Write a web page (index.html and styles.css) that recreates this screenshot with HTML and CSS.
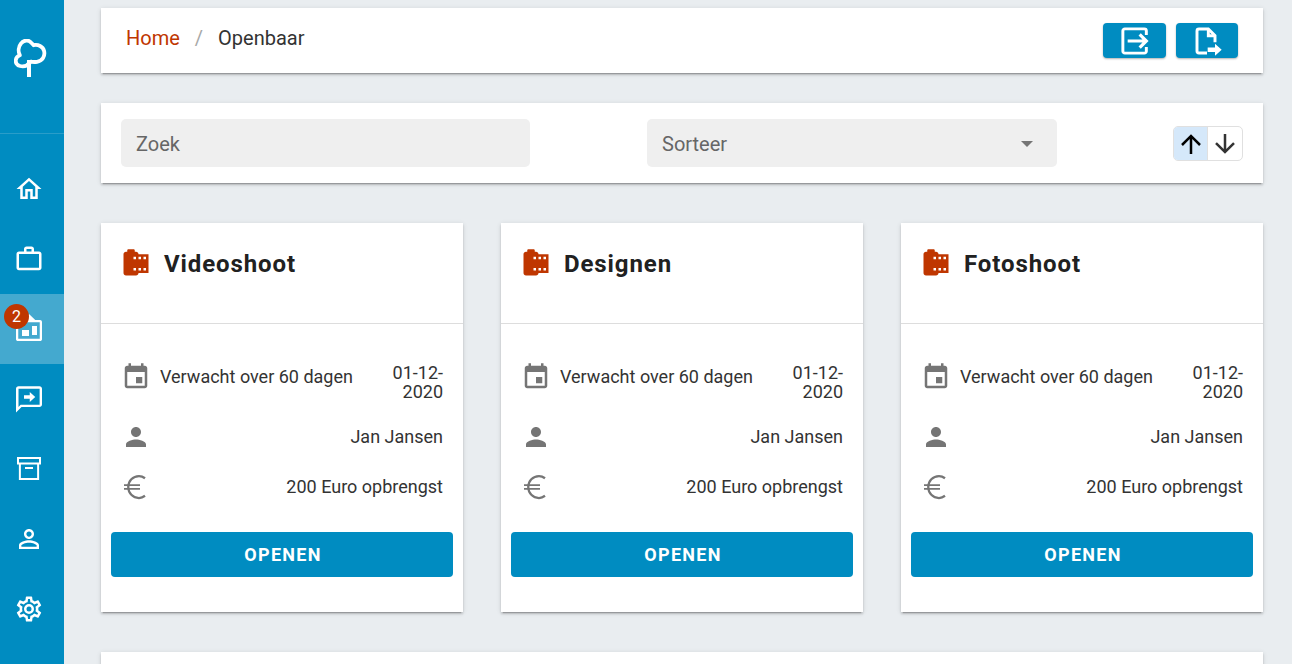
FILE: index.html
```html
<!DOCTYPE html>
<html lang="nl">
<head>
<meta charset="utf-8">
<title>Openbaar</title>
<link rel="stylesheet" href="styles.css">
</head>
<body>
<svg class="defs" width="0" height="0" aria-hidden="true">
  <symbol id="i-roll" viewBox="0 0 24 24"><path d="M14 5c0-1.1-.9-2-2-2h-1V2c0-.55-.45-1-1-1H6c-.55 0-1 .45-1 1v1H4c-1.1 0-2 .9-2 2v15c0 1.1.9 2 2 2h8c1.1 0 2-.9 2-2h8V5h-8zm-2 13h-2v-2h2v2zm0-9h-2V7h2v2zm4 9h-2v-2h2v2zm0-9h-2V7h2v2zm4 9h-2v-2h2v2zm0-9h-2V7h2v2z"/></symbol>
  <symbol id="i-event" viewBox="0 0 24 24"><path d="M17 12h-5v5h5v-5zM16 1v2H8V1H6v2H5c-1.11 0-1.99.9-1.99 2L3 19c0 1.1.89 2 2 2h14c1.1 0 2-.9 2-2V5c0-1.1-.9-2-2-2h-1V1h-2zm3 18H5V8h14v11z"/></symbol>
  <symbol id="i-person" viewBox="0 0 24 24"><path d="M12 12c2.21 0 4-1.79 4-4s-1.79-4-4-4-4 1.79-4 4 1.79 4 4 4zm0 2c-2.67 0-8 1.34-8 4v2h16v-2c0-2.66-5.33-4-8-4z"/></symbol>
  <symbol id="i-euro" viewBox="0 0 24 24"><path d="M19.200 5C17.800 3.900 16.200 3.200 14.400 3.200 9.500 3.200 5.800 7.200 5.800 12s3.700 8.800 8.600 8.800c1.800 0 3.400-.7 4.800-1.800" fill="none" stroke="currentColor" stroke-width="1.800"/><path d="M2.400 10.500H15.200M2.400 13.500H15.200" fill="none" stroke="currentColor" stroke-width="1.500"/></symbol>
</svg>

<nav class="sidebar">
  <div class="brand">
    <svg class="logo" viewBox="14 39 33 38" fill="none" stroke="#fff" stroke-width="3.800" stroke-linejoin="round">
      <path d="M30 62.500C27.500 65.800 23.500 66.800 20 66 16.800 65.300 15.400 62.500 15.800 60 16.100 57.800 17.500 56 19.800 55.200 18 51.500 18.400 46.500 21 43.500 23.500 40 28.500 39.500 31 42.500 32 43.500 33 44.200 33.500 45.200 38 44 43 46.500 44.100 51 45.300 56 42.500 60.800 37 61.800 34 62.300 32 62 30 61.200"/>
      <path d="M29 60V77" stroke-width="4"/>
    </svg>
  </div>
  <a class="nav-item"><svg class="nav-icon" viewBox="0 0 24 24"><path d="M12 5.690l5 4.500V18h-2v-6H9v6H7v-7.810l5-4.500M12 3L2 12h3v8h6v-6h2v6h6v-8h3L12 3z"/></svg></a>
  <a class="nav-item"><svg class="nav-icon" viewBox="0 0 24 24"><path d="M14 6V4h-4v2h4zM4 8v11h16V8H4zm16-2c1.110 0 2 .89 2 2v11c0 1.110-.89 2-2 2H4c-1.110 0-2-.89-2-2l.01-11c0-1.110.88-2 1.990-2h4V4c0-1.110.89-2 2-2h4c1.110 0 2 .89 2 2v2h4z"/></svg></a>
  <a class="nav-item active">
    <svg class="nav-icon" viewBox="0 0 24 24"><path fill-rule="evenodd" d="M12 0L17 4.800h3.900c.8 0 1.500.7 1.500 1.500v13.800c0 .8-.7 1.500-1.500 1.500H3.100c-.8 0-1.500-.7-1.500-1.500V6.300c0-.8.7-1.500 1.500-1.500H7zM3.400 6.600v13.200h17.200V6.600zM6.400 12.800H12v4.800H6.400zM14.400 9.600h4v7.200h-4z"/></svg>
    <span class="badge">2</span>
  </a>
  <a class="nav-item"><svg class="nav-icon" viewBox="0 0 24 24"><path fill-rule="evenodd" d="M3.600 1.800h16.800c1.100 0 2 .9 2 2v12.600c0 1.100-.9 2-2 2H6l-4.400 4.400V3.800c0-1.100.9-2 2-2zm0 1.900v14.600l1.700-1.700h15.200V3.700zM12.600 6.400l4.400 4-4.400 4v-2.600H8V9h4.600z"/></svg></a>
  <a class="nav-item"><svg class="nav-icon" viewBox="0 0 24 24"><path fill-rule="evenodd" d="M2.400 2.400h19.200v6h-1.500v12.400H3.900V8.400H2.400zM4 4v2.800h16V4zM5.500 8.400v10.800h13V8.400zM8.800 10.400h6.400V12H8.800z"/></svg></a>
  <a class="nav-item"><svg class="nav-icon" viewBox="0 0 24 24"><path d="M12 5.900c1.160 0 2.100.94 2.100 2.100s-.94 2.100-2.100 2.100S9.900 9.160 9.900 8s.94-2.100 2.100-2.100m0 9c2.970 0 6.100 1.460 6.100 2.100v1.100H5.900V17c0-.64 3.130-2.100 6.100-2.100M12 4C9.790 4 8 5.790 8 8s1.790 4 4 4 4-1.790 4-4-1.790-4-4-4zm0 9c-2.670 0-8 1.340-8 4v3h16v-3c0-2.660-5.330-4-8-4z"/></svg></a>
  <a class="nav-item"><svg class="nav-icon" viewBox="0 0 24 24"><path d="M12,8A4,4 0 0,1 16,12A4,4 0 0,1 12,16A4,4 0 0,1 8,12A4,4 0 0,1 12,8M12,10A2,2 0 0,0 10,12A2,2 0 0,0 12,14A2,2 0 0,0 14,12A2,2 0 0,0 12,10M10,22C9.750,22 9.540,21.820 9.500,21.580L9.130,18.930C8.500,18.680 7.960,18.340 7.440,17.940L4.950,18.950C4.730,19.030 4.460,18.950 4.340,18.730L2.340,15.270C2.210,15.050 2.270,14.780 2.460,14.630L4.570,12.970L4.500,12L4.570,11L2.460,9.370C2.270,9.220 2.210,8.950 2.340,8.730L4.340,5.270C4.460,5.050 4.730,4.960 4.950,5.050L7.440,6.050C7.960,5.660 8.500,5.320 9.130,5.070L9.500,2.420C9.540,2.180 9.750,2 10,2H14C14.250,2 14.460,2.180 14.500,2.420L14.870,5.070C15.500,5.320 16.040,5.660 16.560,6.050L19.050,5.050C19.270,4.960 19.540,5.050 19.660,5.270L21.660,8.730C21.790,8.950 21.730,9.220 21.540,9.370L19.430,11L19.500,12L19.430,13L21.540,14.630C21.730,14.780 21.790,15.050 21.660,15.270L19.660,18.730C19.540,18.950 19.270,19.040 19.050,18.950L16.560,17.950C16.040,18.340 15.500,18.680 14.870,18.930L14.500,21.580C14.460,21.820 14.250,22 14,22H10M11.250,4L10.880,6.610C9.680,6.860 8.620,7.500 7.850,8.390L5.440,7.350L4.690,8.650L6.800,10.200C6.400,11.370 6.400,12.640 6.800,13.800L4.680,15.360L5.430,16.660L7.860,15.620C8.630,16.500 9.680,17.140 10.870,17.380L11.240,20H12.760L13.130,17.390C14.320,17.140 15.370,16.500 16.140,15.620L18.570,16.660L19.320,15.360L17.200,13.810C17.600,12.640 17.600,11.370 17.200,10.200L19.310,8.650L18.560,7.350L16.150,8.390C15.380,7.500 14.320,6.860 13.120,6.620L12.750,4H11.250Z"/></svg></a>
</nav>

<main class="content">
  <section class="panel breadcrumb-bar">
    <div class="crumbs">
      <a class="crumb-link">Home</a>
      <span class="crumb-sep">/</span>
      <span class="crumb-current">Openbaar</span>
    </div>
    <div class="actions">
      <button class="action">
        <svg class="action-icon" viewBox="0 0 24 24" fill="none" stroke="#fff" stroke-width="2.200"><path d="M20.500 7.500V4.400A1.500 1.500 0 0 0 19 2.900H4.400A1.500 1.500 0 0 0 2.900 4.400v15.200A1.500 1.500 0 0 0 4.400 21.100H19a1.500 1.500 0 0 0 1.500-1.500v-3.100"/><path d="M6.500 12H20M15.500 7l5 5-5 5" stroke-width="2.400"/></svg>
      </button>
      <button class="action action-file">
        <svg class="action-icon" viewBox="0 0 24 24" fill="none" stroke="#fff" stroke-width="2.200"><path d="M12 21H6A1.500 1.500 0 0 1 4.500 19.500v-15A1.500 1.500 0 0 1 6 3h7l5 5v5"/><path d="M13 3v5h5"/><path fill="#fff" stroke="none" d="M12.500 16.800h5.500V14l5 4.500-5 4.500v-2.800h-5.500z"/></svg>
      </button>
    </div>
  </section>

  <section class="panel filter-bar">
    <div class="field">Zoek</div>
    <div class="field field-select">Sorteer<span class="caret"></span></div>
    <div class="toggle">
      <span class="toggle-cell selected"><svg class="toggle-icon" viewBox="0 0 24 24"><path d="M13 20h-2V8l-5.500 5.500-1.420-1.420L12 4.160l7.920 7.920-1.420 1.420L13 8v12z"/></svg></span>
      <span class="toggle-cell"><svg class="toggle-icon muted" viewBox="0 0 24 24"><path d="M11 4h2v12l5.500-5.500 1.420 1.420L12 19.840l-7.920-7.920L5.500 10.500 11 16V4z"/></svg></span>
    </div>
  </section>

  <section class="cards">
    <article class="card">
      <header class="card-head"><svg class="roll"><use href="#i-roll"/></svg><h2 class="card-title">Videoshoot</h2></header>
      <div class="card-body">
        <div class="row row-first"><div class="row-left"><svg class="row-icon"><use href="#i-event"/></svg><span class="row-label">Verwacht over 60 dagen</span></div><span class="row-date">01-12-2020</span></div>
        <div class="row"><svg class="row-icon"><use href="#i-person"/></svg><span class="row-value">Jan Jansen</span></div>
        <div class="row"><svg class="row-icon"><use href="#i-euro"/></svg><span class="row-value">200 Euro opbrengst</span></div>
      </div>
      <button class="open">OPENEN</button>
    </article>
    <article class="card">
      <header class="card-head"><svg class="roll"><use href="#i-roll"/></svg><h2 class="card-title">Designen</h2></header>
      <div class="card-body">
        <div class="row row-first"><div class="row-left"><svg class="row-icon"><use href="#i-event"/></svg><span class="row-label">Verwacht over 60 dagen</span></div><span class="row-date">01-12-2020</span></div>
        <div class="row"><svg class="row-icon"><use href="#i-person"/></svg><span class="row-value">Jan Jansen</span></div>
        <div class="row"><svg class="row-icon"><use href="#i-euro"/></svg><span class="row-value">200 Euro opbrengst</span></div>
      </div>
      <button class="open">OPENEN</button>
    </article>
    <article class="card">
      <header class="card-head"><svg class="roll"><use href="#i-roll"/></svg><h2 class="card-title">Fotoshoot</h2></header>
      <div class="card-body">
        <div class="row row-first"><div class="row-left"><svg class="row-icon"><use href="#i-event"/></svg><span class="row-label">Verwacht over 60 dagen</span></div><span class="row-date">01-12-2020</span></div>
        <div class="row"><svg class="row-icon"><use href="#i-person"/></svg><span class="row-value">Jan Jansen</span></div>
        <div class="row"><svg class="row-icon"><use href="#i-euro"/></svg><span class="row-value">200 Euro opbrengst</span></div>
      </div>
      <button class="open">OPENEN</button>
    </article>
  </section>

  <section class="panel next-panel"></section>
</main>
</body>
</html>
```
FILE: styles.css
```css
* { box-sizing: border-box; }
html, body { height: 100%; }
body {
  margin: 0;
  display: flex;
  height: 664px;
  overflow: hidden;
  background: #e9edf0;
  font-family: Roboto, "Liberation Sans", sans-serif;
  color: #333;
}
.defs { position: absolute; }

.sidebar {
  width: 64px;
  flex: none;
  background: #008cc1;
  display: flex;
  flex-direction: column;
}
.brand {
  height: 134px;
  flex: none;
  border-bottom: 1px solid #2a9dc9;
  margin-bottom: 20px;
  padding: 39px 0 0 14px;
}
.logo { width: 33px; height: 38px; display: block; }
.nav-item {
  height: 70px;
  flex: none;
  display: flex;
  align-items: center;
  justify-content: center;
  padding-right: 6px;
  position: relative;
}
.nav-item.active { background: #44a9cf; }
.nav-icon { width: 30px; height: 30px; fill: #fff; }
.badge {
  position: absolute;
  left: 4px;
  top: 10px;
  width: 25px;
  height: 25px;
  border-radius: 50%;
  background: #bf3600;
  color: #fff;
  font-size: 16px;
  line-height: 25px;
  text-align: center;
}

.content {
  flex: 1;
  min-width: 0;
  padding: 8px 29px 0 37px;
}
.panel, .card {
  background: #fff;
  box-shadow: 0 3px 1px -2px rgba(0,0,0,.2), 0 2px 2px 0 rgba(0,0,0,.14), 0 1px 5px 0 rgba(0,0,0,.12);
}
.breadcrumb-bar {
  height: 65px;
  display: flex;
  justify-content: space-between;
  padding: 15px 25px 0;
}
.crumbs { font-size: 20px; line-height: 30px; display: flex; }
.crumb-link { color: #bf3600; }
.crumb-sep { color: #a8a8a8; margin: 0 15px; }
.crumb-current { color: #333; }
.actions { display: flex; gap: 10px; }
.action {
  width: 63px;
  height: 35px;
  border: 0;
  padding: 0;
  border-radius: 4px;
  background: #008cc1;
  box-shadow: 0 1px 2px rgba(0,0,0,.3);
  display: flex;
  align-items: center;
  justify-content: center;
}
.action-file { width: 62px; }
.action-icon { width: 32px; height: 32px; flex: none; }

.filter-bar {
  margin-top: 30px;
  height: 80px;
  padding: 16px 20px;
  display: flex;
  align-items: flex-start;
}
.field {
  width: 409px;
  height: 48px;
  margin-right: 117px;
  border-radius: 5px;
  background: #efefef;
  color: #666;
  font-size: 20px;
  line-height: 50px;
  padding-left: 15px;
  position: relative;
}
.field-select { width: 410px; margin-right: 0; }
.caret {
  position: absolute;
  right: 24px;
  top: 22px;
  border: 6px solid transparent;
  border-top-color: #757575;
  border-bottom: 0;
}
.toggle {
  width: 70px;
  height: 35px;
  margin: 7px 0 0 auto;
  border: 1px solid #e0e0e0;
  border-radius: 5px;
  display: flex;
}
.toggle-cell {
  width: 34px;
  flex: none;
  display: flex;
  align-items: center;
  justify-content: center;
}
.toggle-cell.selected { background: #d5e8fa; border-right: 1px solid #e0e0e0; border-radius: 4px 0 0 4px; }
.toggle-icon { width: 30px; height: 30px; fill: #000; flex: none; }
.toggle-icon.muted { fill: #333; }

.cards {
  margin-top: 40px;
  display: flex;
  justify-content: space-between;
}
.card {
  width: 362px;
  height: 389px;
  padding: 0 10px;
}
.card-head {
  height: 101px;
  margin: 0 -10px;
  padding: 25px 20px 0;
  border-bottom: 1px solid #ddd;
  display: flex;
  align-items: flex-start;
}
.roll { width: 30px; height: 30px; fill: #bf3600; flex: none; }
.card-title {
  margin: 1px 0 0 13px;
  font-size: 24px;
  line-height: 30px;
  font-weight: 700;
  letter-spacing: .9px;
  color: #212121;
}
.card-body { padding: 28px 10px 20px; }
.row {
  height: 50px;
  display: flex;
  justify-content: space-between;
  align-items: center;
  font-size: 18px;
  color: #333;
}
.row-first { height: 60px; align-items: flex-start; padding-top: 10px; }
.row-left { display: flex; align-items: center; }
.row-label { margin: -2px 0 0 9px; }
.row-value { margin-top: -2px; }
.row-icon { width: 30px; height: 30px; fill: #757575; color: #757575; flex: none; }
.row-date { width: 60px; margin-top: 1px; text-align: right; line-height: 19px; }
.open {
  display: block;
  width: 100%;
  height: 45px;
  border: 0;
  padding: 0 0 0 2px;
  border-radius: 4px;
  background: #008cc1;
  color: #fff;
  font-family: inherit;
  font-size: 18px;
  font-weight: 700;
  letter-spacing: 1.3px;
}
.next-panel { margin-top: 40px; height: 200px; }
```
